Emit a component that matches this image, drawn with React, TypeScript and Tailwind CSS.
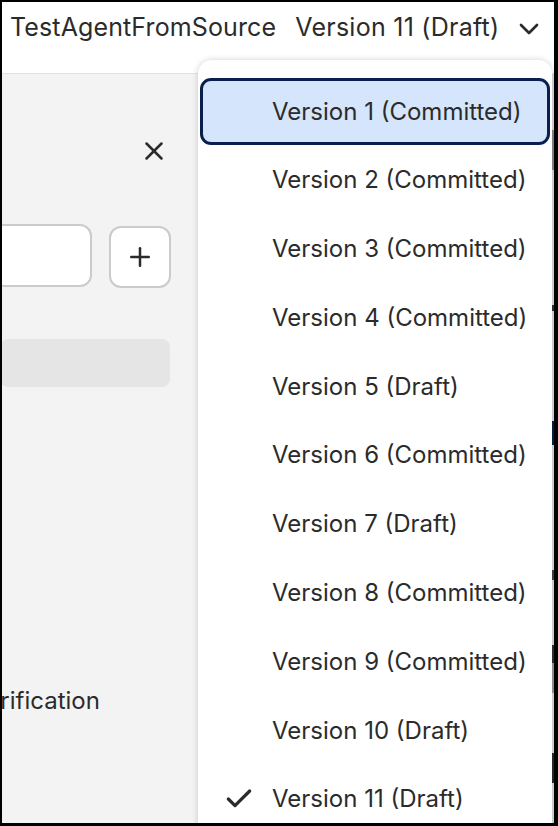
import { Check, ChevronDown, Plus, X } from "lucide-react";

const versions = [
  "Version 1 (Committed)",
  "Version 2 (Committed)",
  "Version 3 (Committed)",
  "Version 4 (Committed)",
  "Version 5 (Draft)",
  "Version 6 (Committed)",
  "Version 7 (Draft)",
  "Version 8 (Committed)",
  "Version 9 (Committed)",
  "Version 10 (Draft)",
  "Version 11 (Draft)",
];

const FOCUSED = 0;
const SELECTED = 10;

function VersionMenu() {
  return (
    <div className="absolute left-[196px] top-[58px] w-[354px] h-[800px] bg-white rounded-t-[14px] shadow-[0_0_6px_rgba(0,0,0,0.18)] pt-[17px] overflow-hidden">
      {versions.map((v, i) => (
        <div key={v} className="h-[68.8px] px-[2px] flex items-center">
          <div
            className={
              i === FOCUSED
                ? "relative w-full h-[67px] flex items-center rounded-[11px] border-[3px] border-[#0a1f4e] bg-[#d5e5fb]"
                : "relative w-full h-[67px] flex items-center"
            }
          >
            {i === SELECTED && (
              <Check className="absolute left-[23px] top-1/2 -translate-y-1/2 w-[32px] h-[32px] text-[#2b2b2b]" strokeWidth={2.4} />
            )}
            <span
              className={
                i === FOCUSED
                  ? "pl-[69px] pt-[1px] text-[24px] text-[#2b2b2b] whitespace-nowrap"
                  : "pl-[72px] text-[24px] text-[#2b2b2b] whitespace-nowrap"
              }
            >
              {v}
            </span>
          </div>
        </div>
      ))}
    </div>
  );
}

export default function App() {
  return (
    <div
      className="w-[558px] h-[826px] bg-black border-l-2 border-t-2 border-r-4 border-b-[3px] border-black overflow-hidden"
      style={{ fontFamily: "Inter, 'Noto Sans', sans-serif" }}
    >
      <div className="relative w-full h-full bg-[#f3f3f3] flex flex-col overflow-hidden">
        {/* header */}
        <div className="h-[72px] bg-white border-b border-[#e2e2e2] flex items-start pt-[7px] pl-[8px] shrink-0 whitespace-nowrap">
          <span className="shrink-0 text-[25px] text-[#2b2b2b] tracking-[0.005em]">TestAgentFromSource</span>
          <span className="shrink-0 ml-[19px] text-[25px] text-[#2b2b2b] tracking-[0.01em]">Version 11 (Draft)</span>
          <ChevronDown className="shrink-0 ml-[14px] mt-[4px] w-[32px] h-[32px] text-[#2b2b2b]" strokeWidth={2} />
        </div>

        {/* body */}
        <div className="flex flex-1">
          <div className="w-[194px] flex flex-col">
            <div className="flex justify-end pr-[27px] pt-[62px]">
              <X className="w-[30px] h-[30px] text-[#2b2b2b]" strokeWidth={2} />
            </div>
            <div className="flex items-start mt-[58px]">
              <div className="h-[63px] bg-white rounded-[12px] border-2 border-[#cbcbcb] -ml-[10px] w-[100px]" />
              <div className="w-[62px] h-[62px] bg-white rounded-[12px] border-2 border-[#cbcbcb] flex items-center justify-center ml-[17px] mt-[2px]">
                <Plus className="w-[30px] h-[30px] text-[#2b2b2b]" strokeWidth={2} />
              </div>
            </div>
            <div className="mt-[51px] w-[170px] h-[48px] rounded-[8px] bg-[#e5e5e5] -ml-[2px]" />
            <div className="mt-[296px] -ml-[31px] text-[24px] text-[#2b2b2b] whitespace-nowrap">Verification</div>
          </div>
          <div className="flex-1" />
          <div className="w-[4px] flex flex-col bg-[#d9d9d9]">
            <div className="h-[56px]" />
            <div className="h-[40px] bg-[#8a8a8a]" />
            <div className="h-[135px]" />
            <div className="h-[6px] bg-[#333]" />
            <div className="h-[110px]" />
            <div className="h-[24px] bg-[#0a1f4e]" />
            <div className="h-[125px]" />
            <div className="h-[10px] bg-[#444]" />
            <div className="h-[65px]" />
            <div className="h-[18px] bg-[#333]" />
            <div className="h-[30px] bg-[#9a9a9a]" />
            <div className="h-[60px]" />
            <div className="h-[30px] bg-[#2b2b2b]" />
          </div>
        </div>

        <VersionMenu />
      </div>
    </div>
  );
}
